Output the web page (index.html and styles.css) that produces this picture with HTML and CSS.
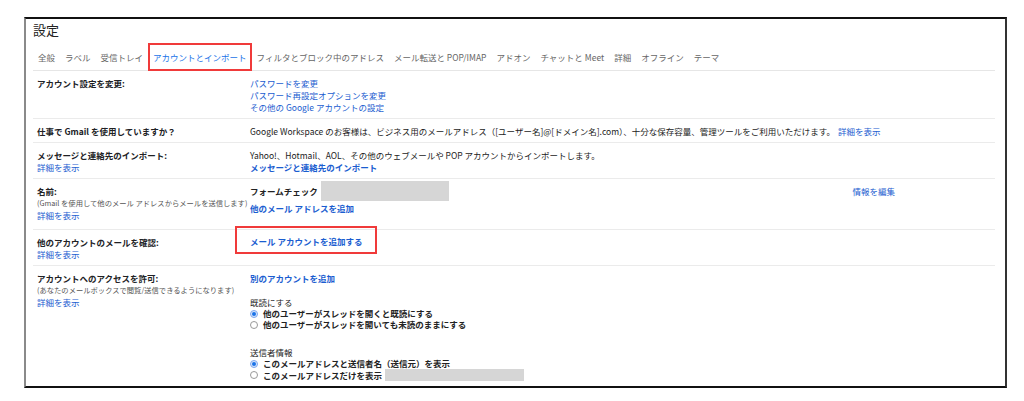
FILE: index.html
```html
<!DOCTYPE html>
<html lang="ja">
<head>
<meta charset="UTF-8">
<title>設定 - アカウントとインポート</title>
<link rel="stylesheet" href="styles.css">
</head>
<body>

<div class="frame">
  <div class="title">設定</div>

  <div class="tabs">
    <span class="tab">全般</span>
    <span class="tab">ラベル</span>
    <span class="tab">受信トレイ</span>
    <span class="tab active">アカウントとインポート</span>
    <span class="tab">フィルタとブロック中のアドレス</span>
    <span class="tab">メール転送と POP/IMAP</span>
    <span class="tab">アドオン</span>
    <span class="tab">チャットと Meet</span>
    <span class="tab">詳細</span>
    <span class="tab">オフライン</span>
    <span class="tab">テーマ</span>
  </div>

  <div class="rows">
    <div class="row">
      <div class="label"><b>アカウント設定を変更:</b></div>
      <div class="value">
        <a href="#">パスワードを変更</a>
        <a href="#">パスワード再設定オプションを変更</a>
        <a href="#">その他の Google アカウントの設定</a>
      </div>
    </div>

    <div class="row">
      <div class="label"><b>仕事で Gmail を使用していますか？</b></div>
      <div class="value">
        <p>Google Workspace のお客様は、ビジネス用のメールアドレス（[ユーザー名]@[ドメイン名].com）、十分な保存容量、管理ツールをご利用いただけます。<a href="#" class="inline">詳細を表示</a></p>
      </div>
    </div>

    <div class="row">
      <div class="label">
        <b>メッセージと連絡先のインポート:</b>
        <a href="#">詳細を表示</a>
      </div>
      <div class="value">
        <p>Yahoo!、Hotmail、AOL、その他のウェブメールや POP アカウントからインポートします。</p>
        <a href="#" class="strong">メッセージと連絡先のインポート</a>
      </div>
    </div>

    <div class="row tall">
      <div class="label">
        <b>名前:</b>
        <span class="note">(Gmail を使用して他のメール アドレスからメールを送信します)</span>
        <a href="#">詳細を表示</a>
      </div>
      <div class="value">
        <div class="name-line">
          <b>フォームチェック</b>
          <span class="redacted name-box"></span>
          <a href="#" class="edit">情報を編集</a>
        </div>
        <a href="#" class="strong">他のメール アドレスを追加</a>
      </div>
    </div>

    <div class="row">
      <div class="label">
        <b>他のアカウントのメールを確認:</b>
        <a href="#">詳細を表示</a>
      </div>
      <div class="value">
        <span class="highlight"><a href="#" class="strong">メール アカウントを追加する</a></span>
      </div>
    </div>

    <div class="row">
      <div class="label">
        <b>アカウントへのアクセスを許可:</b>
        <span class="note">(あなたのメールボックスで閲覧/送信できるようになります)</span>
        <a href="#">詳細を表示</a>
      </div>
      <div class="value">
        <a href="#" class="strong">別のアカウントを追加</a>
        <div class="group">
          <p>既読にする</p>
          <label class="option"><span class="radio on"></span>他のユーザーがスレッドを開くと既読にする</label>
          <label class="option"><span class="radio"></span>他のユーザーがスレッドを開いても未読のままにする</label>
        </div>
        <div class="group sender">
          <p>送信者情報</p>
          <label class="option"><span class="radio on"></span>このメールアドレスと送信者名（送信元）を表示</label>
          <label class="option"><span class="radio"></span>このメールアドレスだけを表示<span class="redacted mail-box"></span></label>
        </div>
      </div>
    </div>
  </div>
</div>

</body>
</html>
```

FILE: styles.css
```css
* {
  box-sizing: border-box;
  padding: 0px;
  margin: 0px;
}

body {
  background-color: white;
  font-family: "Noto Sans CJK JP", "Noto Sans", sans-serif;
  font-size: 8.5px;
  line-height: 12px;
  color: #222;
}

.frame {
  margin: 17px 0 0 24px;
  width: 983px;
  height: 371px;
  overflow: hidden;
  border-top: 2px solid #111;
  border-bottom: 2px solid #111;
  border-left: 2px solid #8a8a8a;
  border-right: 2px solid #333;
  padding: 0 10px 0 7px;
}

.title {
  font-size: 13px;
  line-height: 18px;
  padding: 2px 0 0 0;
  color: #222;
}

.tabs {
  display: flex;
  margin-top: 4px;
  border-bottom: 1px solid #e6e6e6;
}

.tab {
  padding: 6px 3px 5px;
  border: 2px solid transparent;
  color: #666;
  white-space: nowrap;
}

.tab.active {
  border-color: #f03a3a;
  color: #1a73e8;
  margin-bottom: -1px;
}

.row {
  display: grid;
  grid-template-columns: 217px 1fr;
  padding: 6px 0 5px;
  border-bottom: 1px solid #ebebeb;
}

.row.tall {
  padding-bottom: 8px;
}

.label {
  padding-left: 4px;
  display: flex;
  flex-direction: column;
  align-items: flex-start;
}

.label b {
  font-weight: 700;
  color: #202124;
}

.note {
  font-size: 7.3px;
  color: #555;
  white-space: nowrap;
}

.value {
  display: flex;
  flex-direction: column;
  align-items: flex-start;
}

a {
  color: #1a5dd0;
  text-decoration: none;
}

a.strong {
  font-weight: 700;
}

a.inline {
  margin-left: 3px;
}

.name-line {
  display: flex;
  align-items: center;
  width: 100%;
  height: 20px;
  margin-top: -4px;
  margin-bottom: 1px;
}

.name-line b {
  font-weight: 700;
}

.redacted {
  display: inline-block;
  background-color: #d6d6d6;
}

.name-box {
  width: 128px;
  height: 20px;
  margin-left: 3px;
}

.edit {
  margin-left: auto;
  margin-right: 100px;
}

.highlight {
  border: 2px solid #f03a3a;
  padding: 7px 13px 5px 13px;
  margin: -10px 0 -2px -15px;
}

.group {
  margin-top: 12px;
}

.group.sender {
  margin-top: 16px;
}

.option {
  display: flex;
  align-items: center;
  line-height: 11px;
  font-weight: 700;
  color: #222;
}

.radio {
  width: 8px;
  height: 8px;
  border: 1px solid #999;
  border-radius: 50%;
  margin-right: 5px;
  position: relative;
}

.radio.on {
  border-color: #7fa8ee;
  background-color: #dbe7fb;
}

.radio.on::after {
  content: "";
  position: absolute;
  left: 1px;
  top: 1px;
  width: 4px;
  height: 4px;
  border-radius: 50%;
  background-color: #1a73e8;
}

.mail-box {
  width: 139px;
  height: 12px;
  margin-left: 3px;
}
```
